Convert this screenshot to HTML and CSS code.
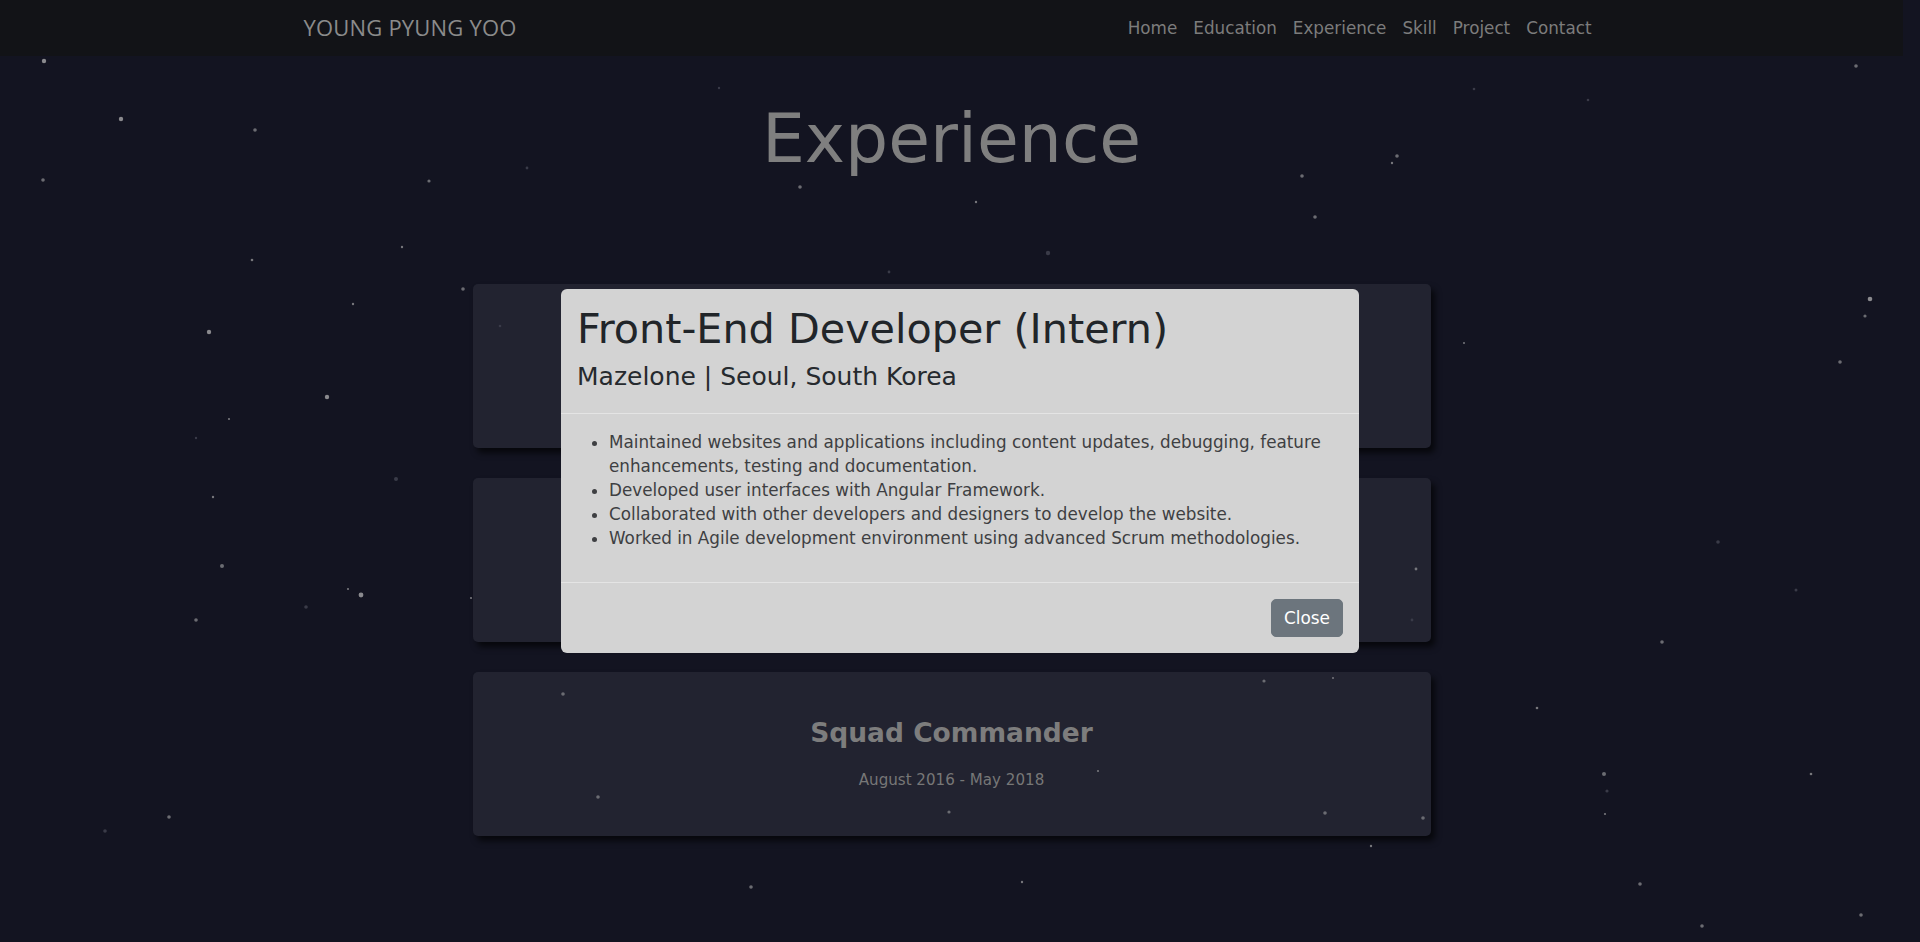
FILE: index.html
```html
<!DOCTYPE html>
<html lang="en">
<head>
<meta charset="utf-8">
<title>Young Pyung Yoo - Experience</title>
<link rel="stylesheet" href="styles.css">
</head>
<body>
<nav class="navbar">
  <div class="container">
    <a class="brand" href="#">YOUNG PYUNG YOO</a>
    <ul class="nav-links">
      <li><a href="#">Home</a></li>
      <li><a href="#">Education</a></li>
      <li><a href="#">Experience</a></li>
      <li><a href="#">Skill</a></li>
      <li><a href="#">Project</a></li>
      <li><a href="#">Contact</a></li>
    </ul>
  </div>
</nav>

<main class="page">
  <h1 class="page-title">Experience</h1>
  <div class="cards">
    <div class="card"></div>
    <div class="card"></div>
    <div class="card">
      <h3>Squad Commander</h3>
      <p>August 2016 - May 2018</p>
    </div>
  </div>
</main>

<svg class="stars" width="1920" height="942" viewBox="0 0 1920 942" aria-hidden="true">
  <circle class="b" cx="44" cy="61" r="2.2"/>
  <circle class="b" cx="121" cy="119" r="2.2"/>
  <circle class="m" cx="255" cy="130" r="1.8"/>
  <circle class="m" cx="43" cy="180" r="1.8"/>
  <circle class="m" cx="429" cy="181" r="1.6"/>
  <circle class="d" cx="527" cy="168" r="1.4"/>
  <circle class="m" cx="800" cy="187" r="1.8"/>
  <circle class="s" cx="976" cy="202" r="1.2"/>
  <circle class="m" cx="1302" cy="176" r="1.8"/>
  <circle class="m" cx="1315" cy="217" r="1.8"/>
  <circle class="m" cx="1397" cy="156" r="1.8"/>
  <circle class="s" cx="1392" cy="163" r="1.2"/>
  <circle class="d" cx="1474" cy="89" r="1.3"/>
  <circle class="d" cx="1588" cy="100" r="1.3"/>
  <circle class="m" cx="1856" cy="66" r="1.8"/>
  <circle class="b" cx="1870" cy="299" r="2.3"/>
  <circle class="m" cx="1865" cy="316" r="1.6"/>
  <circle class="m" cx="1840" cy="362" r="1.8"/>
  <circle class="s" cx="252" cy="260" r="1.3"/>
  <circle class="s" cx="402" cy="247" r="1.2"/>
  <circle class="s" cx="353" cy="304" r="1.2"/>
  <circle class="b" cx="209" cy="332" r="2.2"/>
  <circle class="b" cx="327" cy="397" r="2.2"/>
  <circle class="s" cx="229" cy="419" r="1.1"/>
  <circle class="d" cx="196" cy="438" r="1.2"/>
  <circle class="d" cx="396" cy="479" r="2"/>
  <circle class="s" cx="213" cy="497" r="1.2"/>
  <circle class="m" cx="222" cy="566" r="2"/>
  <circle class="b" cx="361" cy="595" r="2.4"/>
  <circle class="s" cx="348" cy="589" r="1.1"/>
  <circle class="m" cx="196" cy="620" r="1.8"/>
  <circle class="d" cx="306" cy="607" r="1.8"/>
  <circle class="s" cx="471" cy="598" r="1.1"/>
  <circle class="m" cx="169" cy="817" r="1.8"/>
  <circle class="d" cx="105" cy="831" r="1.8"/>
  <circle class="m" cx="563" cy="694" r="1.8"/>
  <circle class="m" cx="598" cy="797" r="1.8"/>
  <circle class="m" cx="751" cy="887" r="1.8"/>
  <circle class="m" cx="949" cy="812" r="1.6"/>
  <circle class="s" cx="1022" cy="882" r="1.2"/>
  <circle class="s" cx="1098" cy="771" r="1.1"/>
  <circle class="m" cx="1264" cy="681" r="1.6"/>
  <circle class="s" cx="1333" cy="678" r="1"/>
  <circle class="m" cx="1325" cy="813" r="1.8"/>
  <circle class="m" cx="1423" cy="818" r="1.8"/>
  <circle class="s" cx="1371" cy="846" r="1.2"/>
  <circle class="m" cx="1604" cy="774" r="2"/>
  <circle class="d" cx="1607" cy="791" r="1.6"/>
  <circle class="s" cx="1605" cy="814" r="1.1"/>
  <circle class="m" cx="1640" cy="884" r="1.8"/>
  <circle class="m" cx="1702" cy="926" r="1.8"/>
  <circle class="m" cx="1861" cy="915" r="1.8"/>
  <circle class="s" cx="1811" cy="774" r="1.3"/>
  <circle class="m" cx="1662" cy="642" r="1.8"/>
  <circle class="s" cx="1537" cy="708" r="1.3"/>
  <circle class="s" cx="1416" cy="569" r="1.4"/>
  <circle class="d" cx="1412" cy="620" r="1.4"/>
  <circle class="d" cx="1718" cy="542" r="1.8"/>
  <circle class="d" cx="1796" cy="590" r="1.5"/>
  <circle class="s" cx="1464" cy="343" r="1"/>
  <circle class="d" cx="889" cy="272" r="1.4"/>
  <circle class="d" cx="1048" cy="253" r="2.2"/>
  <circle class="d" cx="719" cy="88" r="1.2"/>
  <circle class="d" cx="500" cy="326" r="1.3"/>
  <circle class="m" cx="463" cy="289" r="1.8"/>
</svg>

<div class="modal" role="dialog" aria-modal="true">
  <div class="modal-content">
    <div class="modal-header">
      <h1 class="modal-title">Front-End Developer (Intern)</h1>
      <h4 class="modal-subtitle">Mazelone | Seoul, South Korea</h4>
    </div>
    <div class="modal-body">
      <ul>
        <li>Maintained websites and applications including content updates, debugging, feature enhancements, testing and documentation.</li>
        <li>Developed user interfaces with Angular Framework.</li>
        <li>Collaborated with other developers and designers to develop the website.</li>
        <li>Worked in Agile development environment using advanced Scrum methodologies.</li>
      </ul>
    </div>
    <div class="modal-footer">
      <button class="btn-close-modal" type="button">Close</button>
    </div>
  </div>
</div>
</body>
</html>
```
FILE: styles.css
```css
html, body {
  margin: 0;
  padding: 0;
}

body {
  position: relative;
  height: 942px;
  overflow: hidden;
  background: #131421;
  font-family: "DejaVu Sans", "Noto Sans", sans-serif;
}

/* ---------- Navbar ---------- */
.navbar {
  height: 56px;
  margin-right: 17px;
  background: #121317;
}

.navbar .container {
  box-sizing: border-box;
  width: 1320px;
  height: 100%;
  margin: 0 auto;
  padding: 0 12px;
  display: flex;
  align-items: center;
  justify-content: space-between;
}

.brand {
  font-family: "Open Sans", "Liberation Sans", sans-serif;
  font-size: 22px;
  letter-spacing: 0.2px;
  line-height: 30px;
  color: #8b8b8b;
  text-decoration: none;
  margin-top: -2px;
}

.nav-links {
  display: flex;
  list-style: none;
  margin: 0;
  padding: 0;
}

.nav-links a {
  display: block;
  padding: 8px;
  font-size: 16.8px;
  line-height: 24px;
  color: #7c7c7c;
  text-decoration: none;
}

/* ---------- Page ---------- */
.page {
  margin-right: 17px;
}

.page-title {
  margin: 43px 0 105px;
  font-size: 68px;
  line-height: 80px;
  font-weight: 400;
  text-align: center;
  color: #7f7f7f;
}

.cards {
  width: 958px;
  margin: 0 auto;
  display: flex;
  flex-direction: column;
  gap: 30px;
}

.card {
  box-sizing: border-box;
  height: 164px;
  padding-top: 45px;
  background: #222330;
  border-radius: 5px;
  box-shadow: 4px 5px 6px rgba(0, 0, 0, 0.65);
  text-align: center;
}

.card h3 {
  margin: 0 0 21px;
  font-size: 26.5px;
  line-height: 32px;
  font-weight: 700;
  color: #7d7d7d;
}

.card p {
  margin: 0;
  font-size: 15.1px;
  line-height: 20px;
  color: #777777;
}

/* ---------- Stars ---------- */
.stars {
  position: absolute;
  top: 0;
  left: 0;
  z-index: 5;
  pointer-events: none;
}

.stars .b { fill: #8a8a8e; }
.stars .m { fill: #6b6c72; }
.stars .s { fill: #77777c; }
.stars .d { fill: #3a3b48; }

/* ---------- Modal ---------- */
.modal {
  position: fixed;
  inset: 0;
  z-index: 10;
  display: flex;
  align-items: center;
  justify-content: center;
}

.modal-content {
  width: 798px;
  background: #d3d3d3;
  border-radius: 6px;
}

.modal-header {
  padding: 16px;
  border-bottom: 1px solid #e4e4e4;
}

.modal-title {
  margin: 0 0 10px;
  font-size: 41.3px;
  line-height: 48px;
  font-weight: 400;
  color: #212529;
}

.modal-subtitle {
  margin: 0 0 5px;
  font-size: 25px;
  line-height: 28.8px;
  font-weight: 400;
  color: #262a2e;
}

.modal-body {
  padding: 16px;
}

.modal-body ul {
  margin: 0 0 16px;
  padding-left: 32px;
}

.modal-body li {
  font-size: 16.8px;
  line-height: 24px;
  color: #3e3f42;
}

.modal-footer {
  display: flex;
  justify-content: flex-end;
  padding: 12px;
  border-top: 1px solid #e4e4e4;
}

.btn-close-modal {
  margin: 4px;
  padding: 6px 12px;
  font-family: "DejaVu Sans", "Noto Sans", sans-serif;
  font-size: 16.9px;
  line-height: 24px;
  color: #ffffff;
  background: #6c757d;
  border: 1px solid #6c757d;
  border-radius: 5px;
}
```
